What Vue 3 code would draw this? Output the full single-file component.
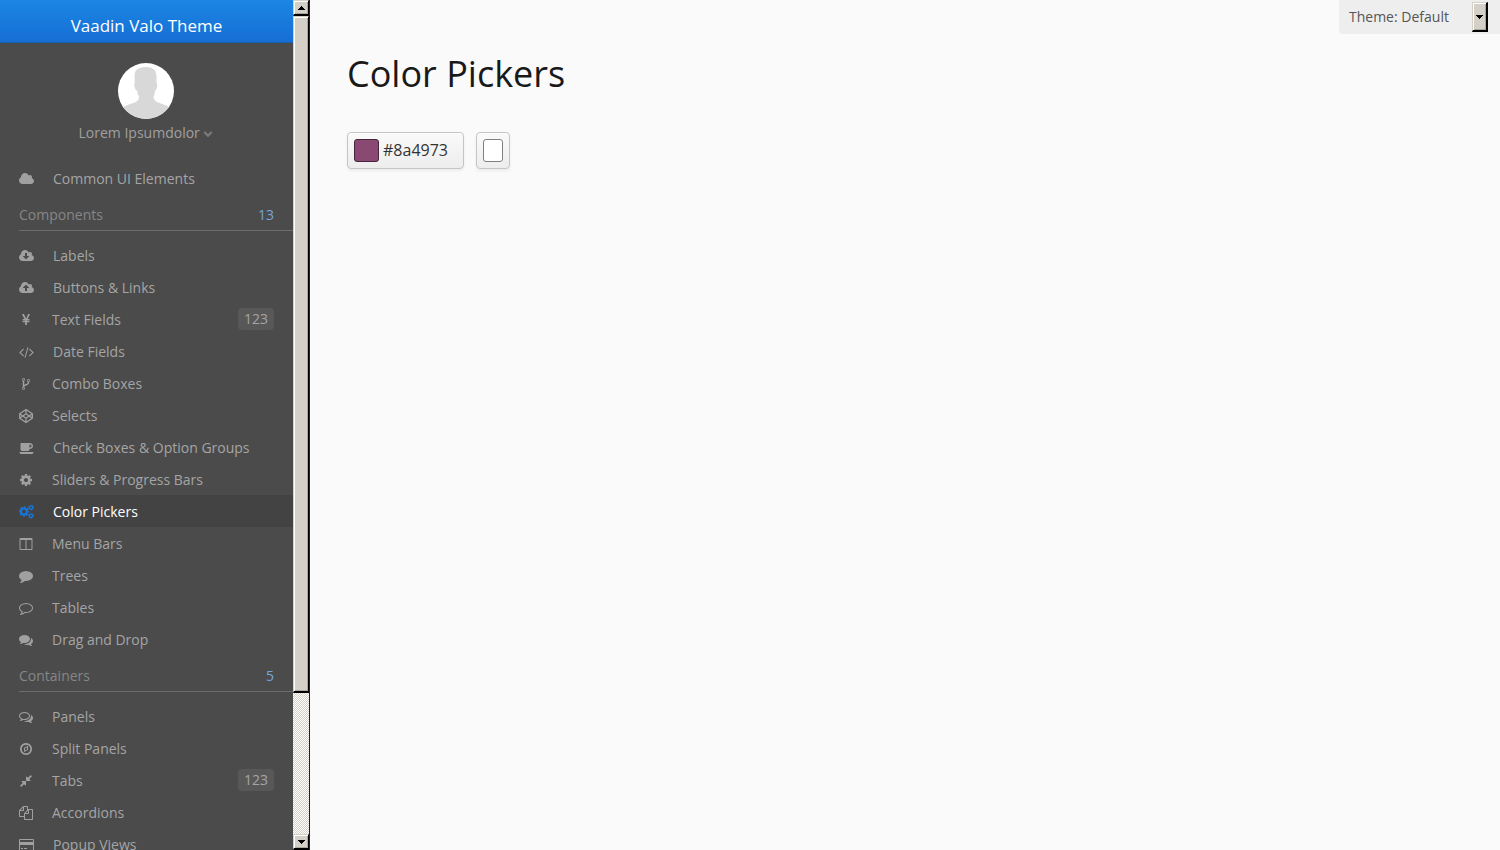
<script setup>
import { ref } from 'vue'

const bubble = 'M1792 896q0 174-120 321.5t-326 233-450 85.5q-70 0-145-8-198 175-460 242-49 14-114 22-17 2-30.5-9t-17.5-29v-1q-3-4-.5-12t2-10 4.5-9.5l6-9 7-8.5 8-9q7-8 31-34.5t34.5-38 31-39.5 32.5-51 27-59 26-76q-157-89-247.5-220t-90.5-281q0-130 71-248.5t191-204.5 286-136.5 348-50.5 348 50.5 286 136.5 191 204.5 71 248.5z'
const cloud = 'M1984 1152q0 159-112.5 271.5t-271.5 112.5h-1088q-185 0-316.5-131.5t-131.5-316.5q0-132 71-241.5t187-163.5q-2-28-2-43 0-212 150-362t362-150q158 0 286.5 88t187.5 230q70-62 166-62 106 0 181 75t75 181q0 75-41 138 129 30 213 134.5t84 239.5z'

const paths = {
  cloud,
  cloudDownload: 'M1344 928q0-14-9-23t-23-9h-224v-352q0-13-9.5-22.5t-22.5-9.5h-192q-13 0-22.5 9.5t-9.5 22.5v352h-224q-13 0-22.5 9.5t-9.5 22.5q0 14 9 23l352 352q9 9 23 9t23-9l351-351q10-12 10-24z' + cloud,
  cloudUpload: 'M1344 864q0-14-9-23l-352-352q-9-9-23-9t-23 9l-351 351q-10 12-10 24 0 14 9 23t23 9h224v352q0 13 9.5 22.5t22.5 9.5h192q13 0 22.5-9.5t9.5-22.5v-352h224q13 0 22.5-9.5t9.5-22.5z' + cloud,
  yen: 'M985.5 1536h-172q-13 0-22.5-9t-9.5-23v-330h-288q-13 0-22.5-9t-9.5-23v-103q0-13 9.5-22.5t22.5-9.5h288v-85h-288q-13 0-22.5-9t-9.5-23v-104q0-13 9.5-22.5t22.5-9.5h214l-321-578q-8-16 0-32 10-16 28-16h194q19 0 29 18l215 425q19 38 56 125 10-24 30.5-68t27.5-61l191-420q8-19 29-19h191q17 0 27 16 9 14 1 31l-313 579h215q13 0 22.5 9.5t9.5 22.5v104q0 14-9.5 23t-22.5 9h-290v85h290q13 0 22.5 9.5t9.5 22.5v103q0 14-9.5 23t-22.5 9h-290v330q0 13-9.5 22.5t-22.5 9.5z',
  code: 'M681 1399l-50 50q-10 10-23 10t-23-10l-466-466q-10-10-10-23t10-23l466-466q10-10 23-10t23 10l50 50q10 10 10 23t-10 23l-393 393 393 393q10 10 10 23t-10 23zm591-1067l-373 1291q-4 13-15.5 19.5t-23.5 2.5l-62-17q-13-4-19.5-15.5t-2.5-24.5l373-1291q4-13 15.5-19.5t23.5-2.5l62 17q13 4 19.5 15.5t2.5 24.5zm657 651l-466 466q-10 10-23 10t-23-10l-50-50q-10-10-10-23t10-23l393-393-393-393q-10-10-10-23t10-23l50-50q10-10 23-10t23 10l466 466q10 10 10 23t-10 23z',
  fork: 'M672 1472q0-40-28-68t-68-28-68 28-28 68 28 68 68 28 68-28 28-68zm0-1152q0-40-28-68t-68-28-68 28-28 68 28 68 68 28 68-28 28-68zm640 128q0-40-28-68t-68-28-68 28-28 68 28 68 68 28 68-28 28-68zm96 0q0 52-26 96.5t-70 69.5q-2 287-226 414-67 38-203 81-128 40-169.5 71t-41.5 100v26q44 25 70 69.5t26 96.5q0 80-56 136t-136 56-136-56-56-136q0-52 26-96.5t70-69.5v-820q-44-25-70-69.5t-26-96.5q0-80 56-136t136-56 136 56 56 136q0 52-26 96.5t-70 69.5v497q54-26 154-57 55-17 87.5-29.5t70.5-31 59-39.5 40.5-51 28-69.5 8.5-91.5q-44-25-70-69.5t-26-96.5q0-80 56-136t136-56 136 56 56 136z',
  codepen: 'M216 1169l603 402v-359l-334-223zm-62-144l193-129-193-129v258zm819 546l603-402-269-180-334 223v359zm-77-494l272-181-272-181-272 181zm-411-274l334-223v-359l-603 402zm960 93l193 129v-258zm-138-93l269-180-603-402v359zm485-180v546q0 41-34 64l-819 546q-21 13-43 13t-43-13l-819-546q-34-23-34-64v-546q0-41 34-64l819-546q21-13 43-13t43 13l819 546q34 23 34 64z',
  coffee: 'M1664 640q0-80-56-136t-136-56h-64v384h64q80 0 136-56t56-136zm-1536 768h1792q0 106-75 181t-181 75h-1280q-106 0-181-75t-75-181zm1728-768q0 159-112.5 271.5t-271.5 112.5h-64v32q0 92-66 158t-158 66h-704q-92 0-158-66t-66-158v-736q0-26 19-45t45-19h1152q159 0 271.5 112.5t112.5 271.5z',
  cog: 'M1152 896q0-106-75-181t-181-75-181 75-75 181 75 181 181 75 181-75 75-181zm512-109v222q0 12-8 23t-20 13l-185 28q-19 54-39 91 35 50 107 138 10 12 10 25t-9 23q-27 37-99 108t-94 71q-12 0-26-9l-138-108q-44 23-91 38-16 136-29 186-7 28-36 28h-222q-14 0-24.5-8.5t-11.5-21.5l-28-184q-49-16-90-37l-141 107q-10 9-25 9-14 0-25-11-126-114-165-168-7-10-7-23 0-12 8-23 15-21 51-66.5t54-70.5q-27-50-41-99l-183-27q-13-2-21-12.5t-8-23.5v-222q0-12 8-23t19-13l186-28q14-46 39-92-40-57-107-138-10-12-10-24 0-10 9-23 26-36 98.5-107.5t94.5-71.5q13 0 26 10l138 107q44-23 91-38 16-136 29-186 7-28 36-28h222q14 0 24.5 8.5t11.5 21.5l28 184q49 16 90 37l142-107q9-9 24-9 13 0 25 10 129 119 165 170 7 8 7 22 0 12-8 23-15 21-51 66.5t-54 70.5q26 50 41 98l183 28q13 2 21 12.5t8 23.5z',
  columns: 'M224 1536h608v-1152h-640v1120q0 13 9.5 22.5t22.5 9.5zm1376-32v-1120h-640v1152h608q13 0 22.5-9.5t9.5-22.5zm128-1216v1216q0 66-47 113t-113 47h-1344q-66 0-113-47t-47-113v-1216q0-66 47-113t113-47h1344q66 0 113 47t47 113z',
  comment: bubble,
  commentOpen: 'M896 384q-204 0-381.5 69.5t-282 187.5-104.5 255q0 112 71.5 213.5t201.5 175.5l87 50-27 96q-24 91-70 172 152-63 275-171l43-38 57 6q69 8 130 8 204 0 381.5-69.5t282-187.5 104.5-255-104.5-255-282-187.5-381.5-69.5z' + bubble,
  comments: 'M1408 768q0 139-94 257t-256.5 186.5-353.5 68.5q-86 0-176-16-124 88-278 128-36 9-86 16h-3q-11 0-20.5-8t-11.5-21q-1-3-1-6.5t.5-6.5 2-6l2.5-5 3.5-5.5 4-5 4.500-5 4-4.5q5-6 23-25t26-29.5 22.5-29 25-38.5 20.5-44q-124-72-195-177t-71-224q0-139 94-257t256.5-186.5 353.5-68.5 353.5 68.5 256.5 186.5 94 257zm384 256q0 120-71 224.5t-195 176.5q10 24 20.5 44t25 38.5 22.5 29 26 29.5 23 25q1 1 4 4.5t4.5 5 4 5 3.5 5.5l2.5 5 2 6 .5 6.5-1 6.5q-3 14-13 22t-22 7q-50-7-86-16-154-40-278-128-90 16-176 16-271 0-472-132 58 4 88 4 161 0 309-45t264-129q125-92 192-212t67-254q0-77-23-152 129 71 204 178t75 230z',
  commentsOpen: 'M704 384q-153 0-286 52t-211.5 141-78.5 191q0 82 53 158t149 132l97 56-35 84q34-20 62-39l44-31 53 10q78 14 153 14 153 0 286-52t211.5-141 78.5-191-78.5-191-211.5-141-286-52zm0-128q191 0 353.5 68.5t256.5 186.5 94 257-94 257-256.5 186.5-353.5 68.5q-86 0-176-16-124 88-278 128-36 9-86 16h-3q-11 0-20.5-8t-11.5-21q-1-3-1-6.5t.5-6.5 2-6l2.5-5 3.5-5.5 4-5 4.5-5 4-4.5q5-6 23-25t26-29.5 22.5-29 25-38.5 20.5-44q-124-72-195-177t-71-224q0-139 94-257t256.5-186.5 353.5-68.5zm822 1169q10 24 20.5 44t25 38.5 22.5 29 26 29.5 23 25q1 1 4 4.5t4.5 5 4 5 3.5 5.5l2.5 5 2 6 .5 6.5-1 6.5q-3 14-13 22t-22 7q-50-7-86-16-154-40-278-128-90 16-176 16-271 0-472-132 58 4 88 4 161 0 309-45t264-129q125-92 192-212t67-254q0-77-23-152 129 71 204 178t75 230q0 120-71 224.5t-195 176.5z',
  compass: 'M768 1081l256-128v-290l-256 128v290zm384-593v542l-512 256v-542zm288 408q0-148-73-273t-198-198-273-73-273 73-198 198-73 273 73 273 198 198 273 73 273-73 198-198 73-273zm224 0q0 209-103 385.5t-279.5 279.5-385.5 103-385.5-103-279.5-279.5-103-385.5 103-385.5 279.5-279.5 385.5-103 385.5 103 279.5 279.5 103 385.5z',
  compress: 'M896 960v448q0 26-19 45t-45 19-45-19l-144-144-332 332q-10 10-23 10t-23-10l-114-114q-10-10-10-23t10-23l332-332-144-144q-19-19-19-45t19-45 45-19h448q26 0 45 19t19 45zm755-672q0 13-10 23l-332 332 144 144q19 19 19 45t-19 45-45 19h-448q-26 0-45-19t-19-45v-448q0-26 19-45t45-19 45 19l144 144 332-332q10-10 23-10t23 10l114 114q10 10 10 23z',
  copy: 'M1696 384q40 0 68 28t28 68v1216q0 40-28 68t-68 28h-960q-40 0-68-28t-28-68v-288h-544q-40 0-68-28t-28-68v-672q0-40 20-88t48-76l408-408q28-28 76-48t88-20h416q40 0 68 28t28 68v328q68-40 128-40h416zm-544 213l-299 299h299v-299zm-640-384l-299 299h299v-299zm196 647l316-316v-416h-384v416q0 40-28 68t-68 28h-416v640h512v-256q0-40 20-88t48-76zm956 804v-1152h-384v416q0 40-28 68t-68 28h-416v640h896z',
  card: 'M224 128h1600q160 0 160 160v1216q0 160-160 160h-1600q-160 0-160-160v-1216q0-160 160-160zm0 128q-32 0-32 32v224h1664v-224q0-32-32-32zm-32 640v608q0 32 32 32h1600q32 0 32-32v-608zm128 512v-128h256v128zm384 0v-128h384v128z'
}
const wide = ['cloud', 'cloudDownload', 'cloudUpload', 'code', 'coffee', 'cogs', 'card']

const groups = [
  { items: [{ icon: 'cloud', label: 'Common UI Elements' }] },
  {
    title: 'Components', count: 13,
    items: [
      { icon: 'cloudDownload', label: 'Labels' },
      { icon: 'cloudUpload', label: 'Buttons & Links' },
      { icon: 'yen', label: 'Text Fields', badge: 123 },
      { icon: 'code', label: 'Date Fields' },
      { icon: 'fork', label: 'Combo Boxes' },
      { icon: 'codepen', label: 'Selects' },
      { icon: 'coffee', label: 'Check Boxes & Option Groups' },
      { icon: 'cog', label: 'Sliders & Progress Bars' },
      { icon: 'cogs', label: 'Color Pickers' },
      { icon: 'columns', label: 'Menu Bars' },
      { icon: 'comment', label: 'Trees' },
      { icon: 'commentOpen', label: 'Tables' },
      { icon: 'comments', label: 'Drag and Drop' }
    ]
  },
  {
    title: 'Containers', count: 5,
    items: [
      { icon: 'commentsOpen', label: 'Panels' },
      { icon: 'compass', label: 'Split Panels' },
      { icon: 'compress', label: 'Tabs', badge: 123 },
      { icon: 'copy', label: 'Accordions' },
      { icon: 'card', label: 'Popup Views' }
    ]
  }
]
const selected = ref('Color Pickers')
</script>

<template>
  <div class="app">
    <aside class="sidebar">
      <div class="menu">
        <header class="brand">Vaadin Valo Theme</header>
        <button class="user" type="button">
          <svg class="avatar" viewBox="0 0 56 56" aria-hidden="true">
            <defs><clipPath id="avatar-clip"><circle cx="28" cy="28" r="28" /></clipPath></defs>
            <g clip-path="url(#avatar-clip)">
              <rect width="56" height="56" fill="#fff" />
              <path fill="#d8d8d8" d="M28 4c-3.500 0-7 .8-9 2.500c-2 1.500-2.500 4-2.500 7l.3 6c-.9 1-.6 3 .1 5.500c.4 1.500 1.200 2.500 2.300 2.700c.3 2.500.6 4.300 1.800 5.500c0 3-1 5-4 6C13 41 9 41.500 4 44.500v12h48v-12c-4-2.500-9-3.500-13-5.500c-2-1-3-3-3.500-5.300c1-1.500 1.200-3.500 1.500-6c1-.4 1.600-1.500 1.900-3c.4-2.500.4-4-.4-5.200c.1-4 .2-8-.8-10.500C36.500 5.500 32 4 28 4z" />
            </g>
          </svg>
          <span class="user-name">Lorem Ipsumdolor
            <svg class="chevron" viewBox="0 0 10 8" aria-hidden="true"><path d="M1.300 2L5 5.700L8.700 2" fill="none" stroke="currentColor" stroke-width="2.200" /></svg>
          </span>
        </button>
        <nav>
          <template v-for="(group, i) in groups" :key="i">
            <h2 v-if="group.title" class="group">
              <span>{{ group.title }}</span><span class="count">{{ group.count }}</span>
            </h2>
            <a
              v-for="item in group.items" :key="item.label" href="#"
              class="item" :class="{ selected: selected === item.label }"
              @click.prevent="selected = item.label"
            >
              <svg v-if="item.icon === 'cogs'" class="icon wide" viewBox="0 0 15 14" fill="none" stroke="currentColor" aria-hidden="true">
                <circle cx="5" cy="6.500" r="3" stroke-width="2.200" />
                <circle cx="5" cy="6.500" r="4.400" stroke-width="1.600" stroke-dasharray="1.900 1.556" stroke-dashoffset=".95" />
                <circle cx="12" cy="2.500" r="1.700" stroke-width="1.300" />
                <circle cx="12" cy="2.500" r="2.500" stroke-width="1" stroke-dasharray="1.300 1.318" />
                <circle cx="12" cy="10.800" r="1.700" stroke-width="1.300" />
                <circle cx="12" cy="10.800" r="2.500" stroke-width="1" stroke-dasharray="1.300 1.318" />
              </svg>
              <svg v-else class="icon" :class="{ wide: wide.includes(item.icon) }" :viewBox="wide.includes(item.icon) ? '64 0 1920 1792' : '0 0 1792 1792'" aria-hidden="true">
                <path :d="paths[item.icon]" fill="currentColor" fill-rule="evenodd" />
              </svg>
              <span class="label">{{ item.label }}</span>
              <span v-if="item.badge" class="badge">{{ item.badge }}</span>
            </a>
          </template>
        </nav>
      </div>
      <div class="scrollbar" aria-hidden="true">
        <div class="cap"><svg viewBox="0 0 7 4" shape-rendering="crispEdges"><path d="M3 0h1v1h1v1h1v1h1v1H0V3h1V2h1V1h1z" /></svg></div>
        <div class="thumb"></div>
        <div class="track"></div>
        <div class="cap"><svg viewBox="0 0 7 4" shape-rendering="crispEdges"><path d="M0 0h7v1H6v1H5v1H4v1H3V3H2V2H1V1H0z" /></svg></div>
      </div>
    </aside>

    <main class="content">
      <div class="theme">
        <select aria-label="Theme">
          <option>Theme: Default</option>
        </select>
        <span class="drop" aria-hidden="true"><svg viewBox="0 0 7 4" shape-rendering="crispEdges"><path d="M0 0h7v1H6v1H5v1H4v1H3V3H2V2H1V1H0z" /></svg></span>
      </div>
      <h1>Color Pickers</h1>
      <div class="pickers">
        <button class="picker" type="button"><span class="swatch"></span><span class="value">#8a4973</span></button>
        <button class="picker small" type="button" aria-label="Pick a color"><span class="swatch white"></span></button>
      </div>
    </main>
  </div>
</template>

<style>
body {
  margin: 0;
  background: #fafafa;
}
</style>

<style scoped>
* {
  box-sizing: border-box;
}
.app {
  display: flex;
  height: 100vh;
  overflow: hidden;
  font-family: "Open Sans", sans-serif;
  font-size: 16px;
  color: #474747;
}
.sidebar {
  flex: none;
  display: flex;
  width: 310px;
}
.menu {
  flex: 1;
  min-width: 0;
  overflow: hidden;
  background: #4b4b4b;
  color: #a5a5a5;
  font-size: 14px;
}
.brand {
  height: 43px;
  padding-top: 9px;
  border-bottom: 1px solid #1362b1;
  background: linear-gradient(#1b87e3, #166ed5);
  color: #fff;
  font-size: 17px;
  line-height: 33px;
  text-align: center;
}
.user {
  display: flex;
  flex-direction: column;
  align-items: center;
  width: 100%;
  margin: 0 0 17px;
  padding: 20px 1px 0 0;
  border: 0;
  background: none;
  color: #a0a0a0;
  font: inherit;
}
.avatar {
  width: 56px;
  height: 56px;
}
.user-name {
  line-height: 24px;
  padding-top: 2px;
}
.chevron {
  width: 10px;
  height: 8px;
  color: #7c7c7c;
}
.group {
  display: flex;
  justify-content: space-between;
  margin: 0 0 8px 19px;
  padding: 5px 19px 0 0;
  border-bottom: 1px solid #6c6c6c;
  color: #868686;
  font-size: 14px;
  font-weight: 400;
  line-height: 31px;
}
.count {
  color: #73a7dd;
}
.item {
  display: flex;
  align-items: center;
  height: 32px;
  padding: 0 19px;
  color: inherit;
  text-decoration: none;
  white-space: nowrap;
}
.item.selected {
  background: #434343;
  color: #fff;
}
.icon {
  flex: none;
  width: 14px;
  height: 14px;
  margin-top: 2px;
  margin-right: 19px;
  color: #a0a0a0;
}
.icon.wide {
  width: 15px;
}
.selected .icon {
  color: #1976d8;
}
.label {
  flex: 1;
}
.badge {
  padding: 0 6px;
  border-radius: 4px;
  background: #585858;
  line-height: 22px;
}
.scrollbar {
  flex: none;
  display: flex;
  flex-direction: column;
  width: 17px;
  border-right: 1px solid #222;
  background: #d4d0c8;
}
.cap,
.thumb,
.drop {
  border-style: solid;
  border-width: 1px 2px 2px 1px;
  border-color: #d4d0c8 #000 #000 #d4d0c8;
  background: #d4d0c8;
  box-shadow: inset 1px 1px #fff, inset -1px -1px #aaa69e;
}
.scrollbar .cap,
.scrollbar .thumb {
  border-right-width: 1px;
}
.cap {
  flex: none;
  display: flex;
  align-items: center;
  justify-content: center;
  height: 16px;
}
.cap svg,
.drop svg {
  width: 7px;
  height: 4px;
}
.thumb {
  flex: 676;
}
.track {
  flex: 142;
  background: repeating-conic-gradient(#d4d0c8 0 25%, #fff 0 50%) 0 0 / 2px 2px;
}
.content {
  flex: 1;
  position: relative;
  padding: 44px 37px;
}
.theme {
  position: absolute;
  top: 0;
  right: 0;
  height: 34px;
  padding: 0 12px 0 10px;
  border-radius: 0 0 0 4px;
  background: #eee;
}
.theme select {
  display: block;
  width: 139px;
  height: 32px;
  margin: 0;
  padding: 0;
  border: 0;
  outline: 0;
  appearance: none;
  background: none;
  color: #555;
  font: 14px "Open Sans", sans-serif;
}
.drop {
  position: absolute;
  top: 2px;
  right: 12px;
  display: flex;
  align-items: center;
  justify-content: center;
  width: 16px;
  height: 30px;
  pointer-events: none;
}
h1 {
  margin: 0 0 28px;
  color: #191919;
  font-size: 36px;
  font-weight: 400;
  line-height: 60px;
}
.pickers {
  display: flex;
  gap: 12px;
}
.picker {
  display: flex;
  align-items: center;
  gap: 4px;
  height: 37px;
  padding: 0 15px 0 6px;
  border: 1px solid #c5c5c5;
  border-radius: 4px;
  background: linear-gradient(#fafafa, #ededed);
  box-shadow: inset 0 1px #fff, 0 2px 3px rgba(0, 0, 0, 0.06);
  color: #333;
  font: 16px "Open Sans", sans-serif;
}
.value {
  padding-bottom: 2px;
}
.picker.small {
  padding: 0 6px;
}
.swatch {
  width: 25px;
  height: 23px;
  border: 1px solid #45253a;
  border-radius: 3px;
  background: #8a4973;
}
.swatch.white {
  width: 20px;
  border-color: #808080;
  background: #fff;
}
</style>
